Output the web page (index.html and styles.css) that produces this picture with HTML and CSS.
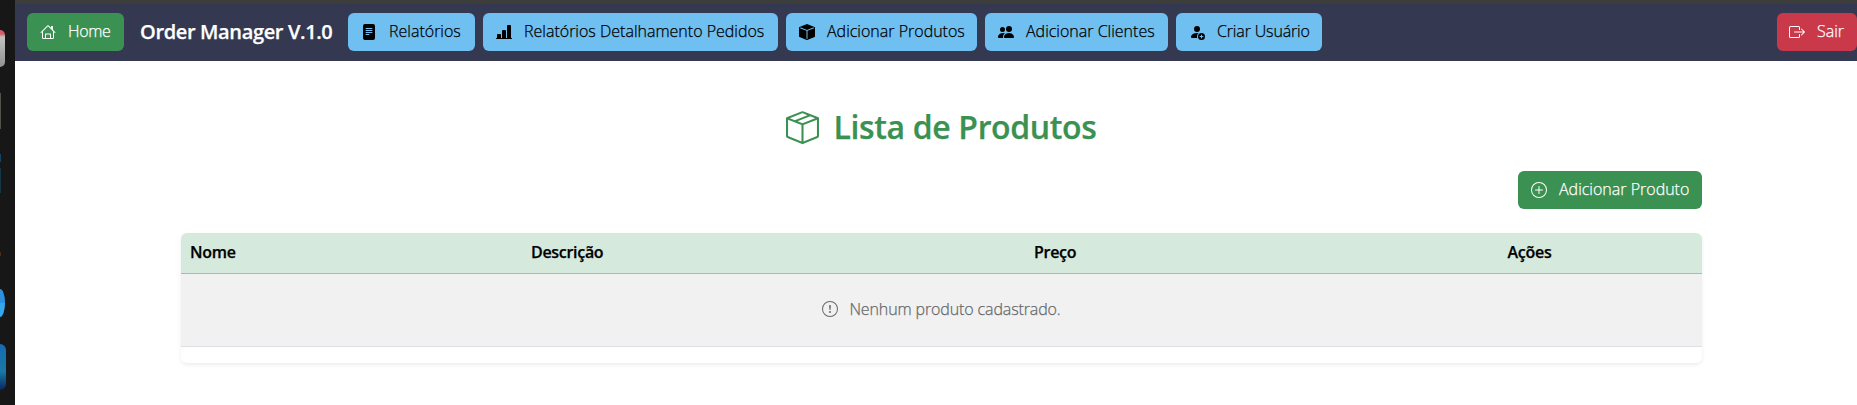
FILE: index.html
```html
<!DOCTYPE html>
<html lang="pt-BR">
<head>
<meta charset="utf-8">
<title>Order Manager</title>
<link rel="stylesheet" href="styles.css">
</head>
<body>
<aside class="dock">
  <span class="app app-files"></span>
  <span class="app app-term"></span>
  <span class="app app-code"></span>
  <span class="app app-teal"></span>
  <span class="app app-rust"></span>
  <span class="app app-round"></span>
  <span class="app app-blue"></span>
</aside>
<div class="window">
  <nav class="navbar">
    <a class="btn btn-success w-home"><svg class="icon" viewBox="0 0 16 16"><path d="M8.707 1.5a1 1 0 0 0-1.414 0L.646 8.146a.5.5 0 0 0 .708.708L2 8.207V13.5A1.5 1.5 0 0 0 3.500 15h9a1.500 1.500 0 0 0 1.500-1.500V8.207l.646.647a.5.5 0 0 0 .708-.708L13 5.793V2.500a.5.5 0 0 0-.5-.5h-1a.5.5 0 0 0-.5.5v1.293zM13 7.207V13.500a.5.5 0 0 1-.5.5H11v-4a.5.5 0 0 0-.5-.5h-5a.5.5 0 0 0-.5.5v4H3.500a.5.5 0 0 1-.5-.5V7.207l5-5zM6 14v-3.500h4V14z"/></svg><span>Home</span></a>
    <span class="brand">Order Manager V.1.0</span>
    <a class="btn btn-info w-rel"><svg class="icon" viewBox="0 0 16 16"><path d="M12 0H4a2 2 0 0 0-2 2v12a2 2 0 0 0 2 2h8a2 2 0 0 0 2-2V2a2 2 0 0 0-2-2M5 4h6a.5.5 0 0 1 0 1H5a.5.5 0 1 1 0-1m-.5 2.500A.5.5 0 0 1 5 6h6a.5.5 0 0 1 0 1H5a.5.5 0 0 1-.5-.5M5 8h6a.5.5 0 0 1 0 1H5a.5.5 0 0 1 0-1m0 2h3a.5.5 0 0 1 0 1H5a.5.5 0 0 1 0-1"/></svg><span>Relatórios</span></a>
    <a class="btn btn-info w-det"><svg class="icon" viewBox="0 0 16 16"><path d="M11 2a1 1 0 0 1 1-1h2a1 1 0 0 1 1 1v12h.5a.5.5 0 0 1 0 1H.5a.5.5 0 0 1 0-1H1v-3a1 1 0 0 1 1-1h2a1 1 0 0 1 1 1v3h1V7a1 1 0 0 1 1-1h2a1 1 0 0 1 1 1v7h1z"/></svg><span>Relatórios Detalhamento Pedidos</span></a>
    <a class="btn btn-info w-prod"><svg class="icon" viewBox="0 0 16 16"><path fill-rule="evenodd" d="M15.528 2.973a.75.75 0 0 1 .472.696v8.662a.75.75 0 0 1-.472.696l-7.250 2.900a.75.75 0 0 1-.557 0l-7.250-2.900A.75.75 0 0 1 0 12.331V3.669a.75.75 0 0 1 .471-.696L7.443.184l.004-.001.274-.11a.75.75 0 0 1 .558 0l.274.11.004.001zm-1.374.527L8 5.962 1.846 3.500 1 3.839v.4l6.500 2.600v7.922l.5.200.5-.2V6.840l6.500-2.600v-.4l-.846-.339Z"/></svg><span>Adicionar Produtos</span></a>
    <a class="btn btn-info w-cli"><svg class="icon" viewBox="0 0 16 16"><path d="M7 14s-1 0-1-1 1-4 5-4 5 3 5 4-1 1-1 1zm4-6a3 3 0 1 0 0-6 3 3 0 0 0 0 6m-5.784 6A2.240 2.240 0 0 1 5 13c0-1.355.68-2.750 1.936-3.720A6.300 6.300 0 0 0 5 9c-4 0-5 3-5 4s1 1 1 1zM4.500 8a2.500 2.500 0 1 0 0-5 2.500 2.500 0 0 0 0 5"/></svg><span>Adicionar Clientes</span></a>
    <a class="btn btn-info w-user"><svg class="icon" viewBox="0 0 16 16"><path d="M12.500 16a3.500 3.500 0 1 0 0-7 3.500 3.500 0 0 0 0 7m.5-5v1h1a.5.5 0 0 1 0 1h-1v1a.5.5 0 0 1-1 0v-1h-1a.5.5 0 0 1 0-1h1v-1a.5.5 0 0 1 1 0m-2-6a3 3 0 1 1-6 0 3 3 0 0 1 6 0"/><path d="M2 13c0 1 1 1 1 1h5.256A4.500 4.500 0 0 1 8 12.500a4.500 4.500 0 0 1 1.544-3.393Q8.844 9.002 8 9c-5 0-6 3-6 4"/></svg><span>Criar Usuário</span></a>
    <a class="btn btn-danger w-exit"><svg class="icon" viewBox="0 0 16 16"><path fill-rule="evenodd" d="M10 12.500a.5.5 0 0 1-.5.5h-8a.5.5 0 0 1-.5-.5v-9a.5.5 0 0 1 .5-.5h8a.5.5 0 0 1 .5.5v2a.5.5 0 0 0 1 0v-2A1.500 1.500 0 0 0 9.500 2h-8A1.500 1.500 0 0 0 0 3.500v9A1.500 1.500 0 0 0 1.500 14h8a1.500 1.500 0 0 0 1.500-1.500v-2a.5.5 0 0 0-1 0z"/><path fill-rule="evenodd" d="M15.854 8.354a.5.5 0 0 0 0-.708l-3-3a.5.5 0 0 0-.708.708L14.293 7.500H5.500a.5.5 0 0 0 0 1h8.793l-2.147 2.146a.5.5 0 0 0 .708.708z"/></svg><span>Sair</span></a>
  </nav>
  <main class="content">
    <h1 class="title"><svg class="title-icon" viewBox="0 0 16 16"><path d="M8.186 1.113a.5.5 0 0 0-.372 0L1.846 3.500l2.404.961L10.404 2zm3.564 1.426L5.596 5 8 5.961 14.154 3.500zm3.250 1.700-6.500 2.600v7.922l6.500-2.600V4.240zM7.500 14.762V6.838L1 4.239v7.923zM7.443.184a1.500 1.500 0 0 1 1.114 0l7.129 2.852A.5.5 0 0 1 16 3.500v8.662a1 1 0 0 1-.629.928l-7.185 2.874a.5.5 0 0 1-.372 0L.63 13.090a1 1 0 0 1-.63-.928V3.500a.5.5 0 0 1 .314-.464z"/></svg><span>Lista de Produtos</span></h1>
    <div class="actions">
      <a class="btn btn-success w-add"><svg class="icon" viewBox="0 0 16 16"><path d="M8 15A7 7 0 1 1 8 1a7 7 0 0 1 0 14m0 1A8 8 0 1 0 8 0a8 8 0 0 0 0 16"/><path d="M8 4a.5.5 0 0 1 .5.5v3h3a.5.5 0 0 1 0 1h-3v3a.5.5 0 0 1-1 0v-3h-3a.5.5 0 0 1 0-1h3v-3A.5.5 0 0 1 8 4"/></svg><span>Adicionar Produto</span></a>
    </div>
    <div class="card">
      <table class="table">
        <colgroup><col class="c1"><col class="c2"><col class="c3"><col class="c4"></colgroup>
        <thead><tr><th>Nome</th><th>Descrição</th><th>Preço</th><th class="center">Ações</th></tr></thead>
        <tbody><tr><td colspan="4"><div class="empty"><svg class="icon" viewBox="0 0 16 16"><path d="M8 15A7 7 0 1 1 8 1a7 7 0 0 1 0 14m0 1A8 8 0 1 0 8 0a8 8 0 0 0 0 16"/><path d="M7.002 11a1 1 0 1 1 2 0 1 1 0 0 1-2 0M7.100 4.995a.905.905 0 1 1 1.800 0l-.35 3.507a.552.552 0 0 1-1.100 0z"/></svg><span>Nenhum produto cadastrado.</span></div></td></tr></tbody>
      </table>
    </div>
  </main>
</div>
</body>
</html>
```
FILE: styles.css
```css
* { box-sizing: border-box; }
body {
  margin: 0;
  height: 405px;
  display: flex;
  overflow: hidden;
  background: #fff;
  color: #000;
  font: 300 16px/24px "Open Sans", "Noto Sans", sans-serif;
  -webkit-text-stroke: .25px currentColor;
}
.dock {
  width: 15px;
  flex: none;
  display: flex;
  flex-direction: column;
  background: #171717;
}
.app { flex: none; width: 1px; }
.app-files { width: 5px; height: 37px; margin-top: 30px; border-radius: 0 5px 5px 0; background: linear-gradient(#d55c6c 4px, #c2c2c2 7px, #909192); }
.app-term { height: 36px; margin-top: 26px; background: #51524c; }
.app-code { height: 8px; margin-top: 25px; background: #124463; }
.app-teal { height: 25px; margin-top: 6px; background: #14384a; }
.app-rust { height: 4px; margin-top: 59px; background: #502a1c; }
.app-round { width: 5px; height: 28px; margin-top: 33px; border-radius: 0 5px 5px 0 / 0 14px 14px 0; background: linear-gradient(#2b91df 50%, #35a5ec 50%); }
.app-blue { width: 6px; height: 46px; margin-top: 27px; border-radius: 0 6px 6px 0; background: linear-gradient(#1869b2, #1879a5 60%, #0a2560); }
.window { flex: 1; min-width: 0; }
.navbar {
  height: 61px;
  border-top: 4px solid #3d3d3c;
  padding: 9px 0 10px 12px;
  display: flex;
  align-items: center;
  gap: 8px;
  background: #343851;
}
.brand {
  width: 192px;
  margin: 0 8px;
  white-space: nowrap;
  color: #fff;
  font-size: 20px;
  font-weight: 600;
  letter-spacing: -.36px;
}
.btn {
  height: 38px;
  flex: none;
  padding: 0 13px;
  border-radius: 6px;
  display: flex;
  align-items: center;
  gap: 12px;
  white-space: nowrap;
}
.btn span { padding-bottom: 2px; }
.btn-success { background: #3a9152; color: #fff; }
.btn-info { background: #6fbff1; color: #000; }
.btn-danger { background: #ca394a; color: #fff; }
.icon { width: 16px; height: 16px; flex: none; fill: currentColor; }
.w-home { width: 97px; letter-spacing: -.3px; }
.w-rel { width: 127px; }
.w-det { width: 295px; }
.w-prod { width: 191px; }
.w-cli { width: 183px; }
.w-user { width: 146px; letter-spacing: -.15px; }
.w-exit { width: 80px; margin-left: auto; padding-left: 12px; }
.w-add { width: 184px; }
.content { padding: 46px 155px 0 166px; }
.title {
  margin: 0;
  height: 40px;
  display: flex;
  align-items: center;
  justify-content: center;
  gap: 14px;
  color: #3a9152;
  font-size: 32px;
  font-weight: 600;
  letter-spacing: -.36px;
  white-space: nowrap;
}
.title-icon { width: 33px; height: 33px; fill: currentColor; }
.actions { display: flex; justify-content: flex-end; margin: 24px 0; }
.card {
  height: 130px;
  overflow: hidden;
  border-radius: 6px;
  background: #fff;
  box-shadow: 0 2px 4px rgba(0, 0, 0, .075);
}
.table { width: 100%; table-layout: fixed; border-collapse: separate; border-spacing: 0; }
.c1 { width: 341px; }
.c2 { width: 503px; }
.c3 { width: 332px; }
th {
  height: 41px;
  padding: 0 9px 2px;
  background: #d5e9dc;
  border-bottom: 1px solid #aabab0;
  text-align: left;
  font-weight: 600;
  letter-spacing: -.3px;
}
.center { text-align: center; }
td {
  height: 73px;
  padding: 0 0 2px;
  background: #f1f1f1;
  border-bottom: 1px solid #dee0e5;
}
.empty { display: flex; align-items: center; justify-content: center; gap: 11px; color: #66696c; letter-spacing: -.12px; }
```
